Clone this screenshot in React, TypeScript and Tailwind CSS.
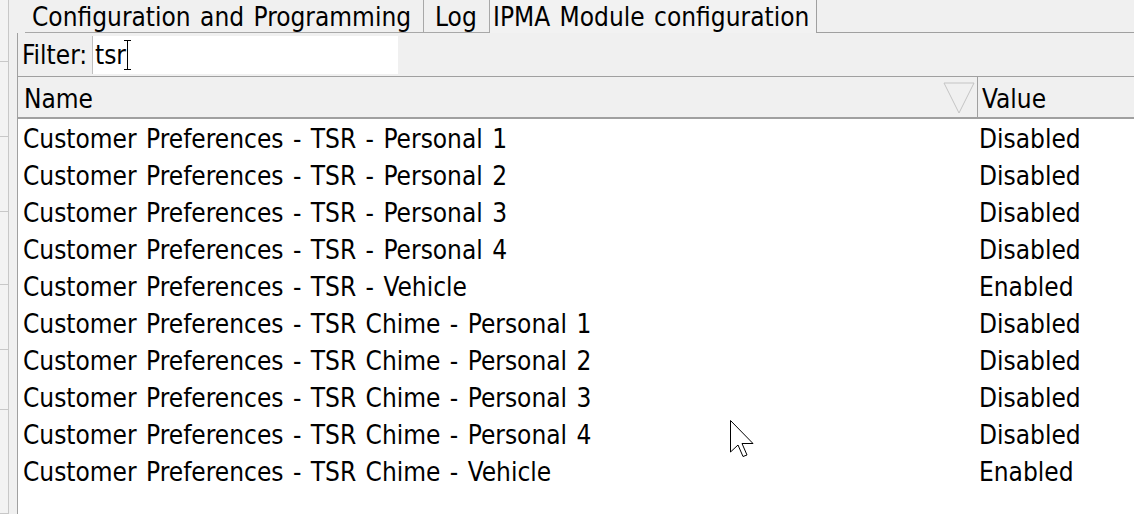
import React from "react";

const rows: { name: string; value: string }[] = [
  { name: "Customer Preferences - TSR - Personal 1", value: "Disabled" },
  { name: "Customer Preferences - TSR - Personal 2", value: "Disabled" },
  { name: "Customer Preferences - TSR - Personal 3", value: "Disabled" },
  { name: "Customer Preferences - TSR - Personal 4", value: "Disabled" },
  { name: "Customer Preferences - TSR - Vehicle", value: "Enabled" },
  { name: "Customer Preferences - TSR Chime - Personal 1", value: "Disabled" },
  { name: "Customer Preferences - TSR Chime - Personal 2", value: "Disabled" },
  { name: "Customer Preferences - TSR Chime - Personal 3", value: "Disabled" },
  { name: "Customer Preferences - TSR Chime - Personal 4", value: "Disabled" },
  { name: "Customer Preferences - TSR Chime - Vehicle", value: "Enabled" },
];

function SideStrip() {
  // edge of the neighbouring docked panel, mostly cut off
  return (
    <div className="flex w-[17px] shrink-0 flex-col bg-[#f0f0f0]">
      {[62, 75, 75, 73, 65, 60, 104].map((h, i) => (
        <div
          key={i}
          className="w-[9px] border-b border-r border-[#c8c8c8] bg-[#f3f3f3]"
          style={{ height: h }}
        />
      ))}
    </div>
  );
}

function Tabs() {
  return (
    <div className="flex h-[33px] pl-[8px]">
      <div className="flex w-[399px] items-center border-r border-b border-[#a8a8a8] bg-[#f0f0f0] pl-[7px] pt-[2px]">
        Configuration and Programming
      </div>
      <div className="flex w-[66px] items-center border-r border-b border-[#a8a8a8] bg-[#f0f0f0] pl-[11px] pt-[2px]">
        Log
      </div>
      <div className="flex w-[327px] items-center border-r border-[#a0a0a0] bg-[#f2f2f2] pl-[3px]">
        IPMA Module configuration
      </div>
      <div className="flex-1 border-b border-[#a0a0a0]" />
    </div>
  );
}

function Cursor() {
  return (
    <svg
      className="absolute left-[729px] top-[419px]"
      width="28"
      height="40"
      viewBox="0 0 28 40"
    >
      <path
        d="M1.5 1.5 L1.5 33 L9 26 L14 37.5 L18 36 L13 24.5 L24 24.5 Z"
        fill="#ffffff"
        stroke="#000000"
        strokeWidth="1"
        strokeLinejoin="miter"
      />
    </svg>
  );
}

export default function App() {
  return (
    <div
      className="relative h-[514px] w-[1134px] overflow-hidden bg-[#f0f0f0] text-[26px] leading-none text-black [word-spacing:2px]"
      style={{ fontFamily: '"DejaVu Sans Condensed", "DejaVu Sans", sans-serif' }}
    >
      <div className="flex h-full">
        <SideStrip />
        <div className="flex min-w-0 flex-1 flex-col">
          <Tabs />
          <div className="flex flex-1 flex-col border-l border-[#a0a0a0]">
            <div className="flex h-[44px] items-center border-b border-[#a0a0a0] pl-[4px]">
              <span className="w-[70px]">Filter:</span>
              <div className="relative flex h-[38px] w-[306px] items-center border-l border-[#c0c0c0] bg-white pl-[2px]">
                tsr
                <span className="absolute left-[30px] top-[4px] flex h-[30px] w-[8px] flex-col items-center justify-between">
                  <span className="h-px w-[7px] bg-black" />
                  <span className="w-px flex-1 bg-black" />
                  <span className="h-px w-[7px] bg-black" />
                </span>
              </div>
            </div>
            <div className="flex h-[42px] border-b-2 border-[#a0a0a0] bg-[#f0f0f0]">
              <div className="relative flex w-[960px] items-center border-r border-[#a0a0a0] pl-[6px] pt-[3px]">
                Name
                <svg className="absolute left-[925px] top-[5px]" width="32" height="32" viewBox="0 0 32 32">
                  <path d="M1 1 L31 1 L16 31 Z" fill="none" stroke="#c4c4c4" strokeWidth="1" />
                </svg>
              </div>
              <div className="flex flex-1 items-center pl-[4px] pt-[3px]">Value</div>
            </div>
            <div className="flex-1 bg-white">
              {rows.map((r) => (
                <div key={r.name} className="flex h-[37px] items-center pt-[2px]">
                  <div className="w-[961px] pl-[5px]">{r.name}</div>
                  <div className="flex-1">{r.value}</div>
                </div>
              ))}
            </div>
          </div>
        </div>
      </div>
      <Cursor />
    </div>
  );
}
